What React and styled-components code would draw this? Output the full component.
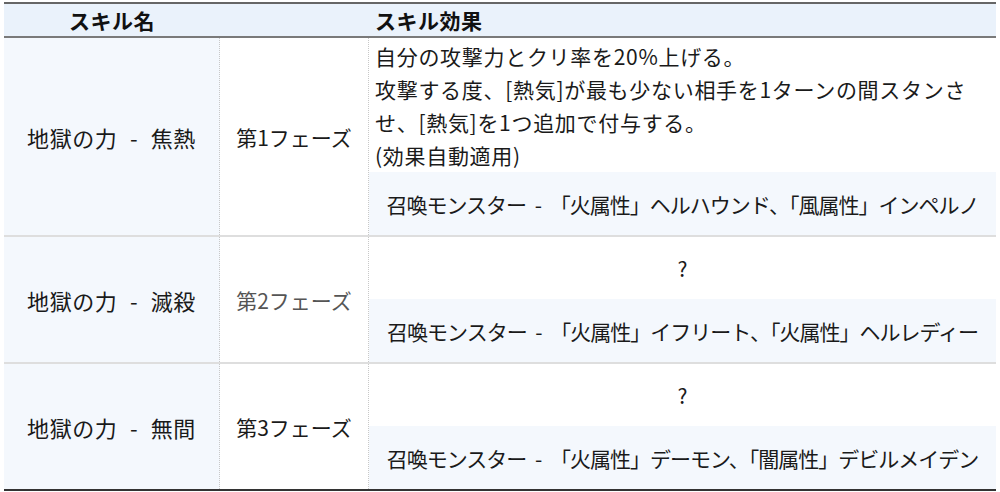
import styled, { createGlobalStyle } from "styled-components";

const GlobalStyle = createGlobalStyle`
  body {
    margin: 0;
    background: #ffffff;
    font-family: "Noto Sans CJK JP", "Noto Sans", sans-serif;
    color: #1a1a1a;
  }
`;

// one entry per skill phase
const skills = [
  {
    name: "地獄の力 - 焦熱",
    phase: "第1フェーズ",
    effect: [
      "自分の攻撃力とクリ率を20%上げる。",
      "攻撃する度、[熱気]が最も少ない相手を1ターンの間スタンさ",
      "せ、[熱気]を1つ追加で付与する。",
      "(効果自動適用)",
    ],
    summon: "召喚モンスター - 「火属性」ヘルハウンド、「風属性」インペルノ",
  },
  {
    name: "地獄の力 - 滅殺",
    phase: "第2フェーズ",
    muted: true,
    effect: null,
    summon: "召喚モンスター - 「火属性」イフリート、「火属性」ヘルレディー",
  },
  {
    name: "地獄の力 - 無間",
    phase: "第3フェーズ",
    effect: null,
    summon: "召喚モンスター - 「火属性」デーモン、「闇属性」デビルメイデン",
  },
];

const App = () => {
  return (
    <>
      <GlobalStyle />
      <Table>
        <HeaderRow>
          <HeadCell>スキル名</HeadCell>
          <HeadCell $left>スキル効果</HeadCell>
        </HeaderRow>
        {skills.map((s, i) => (
          <SkillRow key={s.phase} $last={i === skills.length - 1}>
            <NameCell>{s.name}</NameCell>
            <PhaseCell $muted={s.muted}>{s.phase}</PhaseCell>
            <EffectCell>
              {s.effect ? (
                <EffectText>
                  {s.effect.map((line) => (
                    <Line key={line}>{line}</Line>
                  ))}
                </EffectText>
              ) : (
                <Unknown>?</Unknown>
              )}
              <Summon>{s.summon}</Summon>
            </EffectCell>
          </SkillRow>
        ))}
      </Table>
    </>
  );
};

const Table = styled.div`
  margin: 2px 0 0 4px;
  width: 992px;
  border-top: 2px solid #666666;
  border-bottom: 2px solid #333333;
`;

const HeaderRow = styled.div`
  display: grid;
  grid-template-columns: 216px 1fr;
  height: 32px;
  background: #eaf2fb;
  border-bottom: 2px solid #7a7a7a;
`;

const HeadCell = styled.div`
  display: flex;
  align-items: center;
  justify-content: ${(p) => (p.$left ? "flex-start" : "center")};
  padding-left: ${(p) => (p.$left ? "155px" : "0")};
  font-size: 21px;
  font-weight: 700;
  letter-spacing: 0.5px;
  color: #111111;
`;

const SkillRow = styled.div`
  display: grid;
  grid-template-columns: 216px 149px 1fr;
  border-bottom: ${(p) => (p.$last ? "none" : "2px solid #dedede")};
`;

const NameCell = styled.div`
  display: flex;
  align-items: center;
  justify-content: center;
  background: #f4f8fd;
  border-right: 1px dotted #c8c8c8;
  font-size: 22px;
  letter-spacing: 0.6px;
  word-spacing: 7px;
`;

const PhaseCell = styled.div`
  display: flex;
  align-items: center;
  justify-content: center;
  border-right: 1px dotted #c8c8c8;
  font-size: 21px;
  color: ${(p) => (p.$muted ? "#555555" : "#1a1a1a")};
`;

const EffectCell = styled.div`
  display: flex;
  flex-direction: column;
`;

const EffectText = styled.div`
  padding: 2px 6px 0 6px;
  font-size: 21px;
  line-height: 33px;
  letter-spacing: 0.7px;
`;

const Line = styled.div`
  white-space: nowrap;
`;

const Unknown = styled.div`
  height: 62px;
  display: flex;
  align-items: center;
  justify-content: center;
  font-size: 21px;
`;

const Summon = styled.div`
  height: 63px;
  display: flex;
  align-items: center;
  justify-content: center;
  background: #f4f8fd;
  font-size: 21px;
  letter-spacing: -1px;
  word-spacing: 5px;
  white-space: nowrap;
`;

export default App;
